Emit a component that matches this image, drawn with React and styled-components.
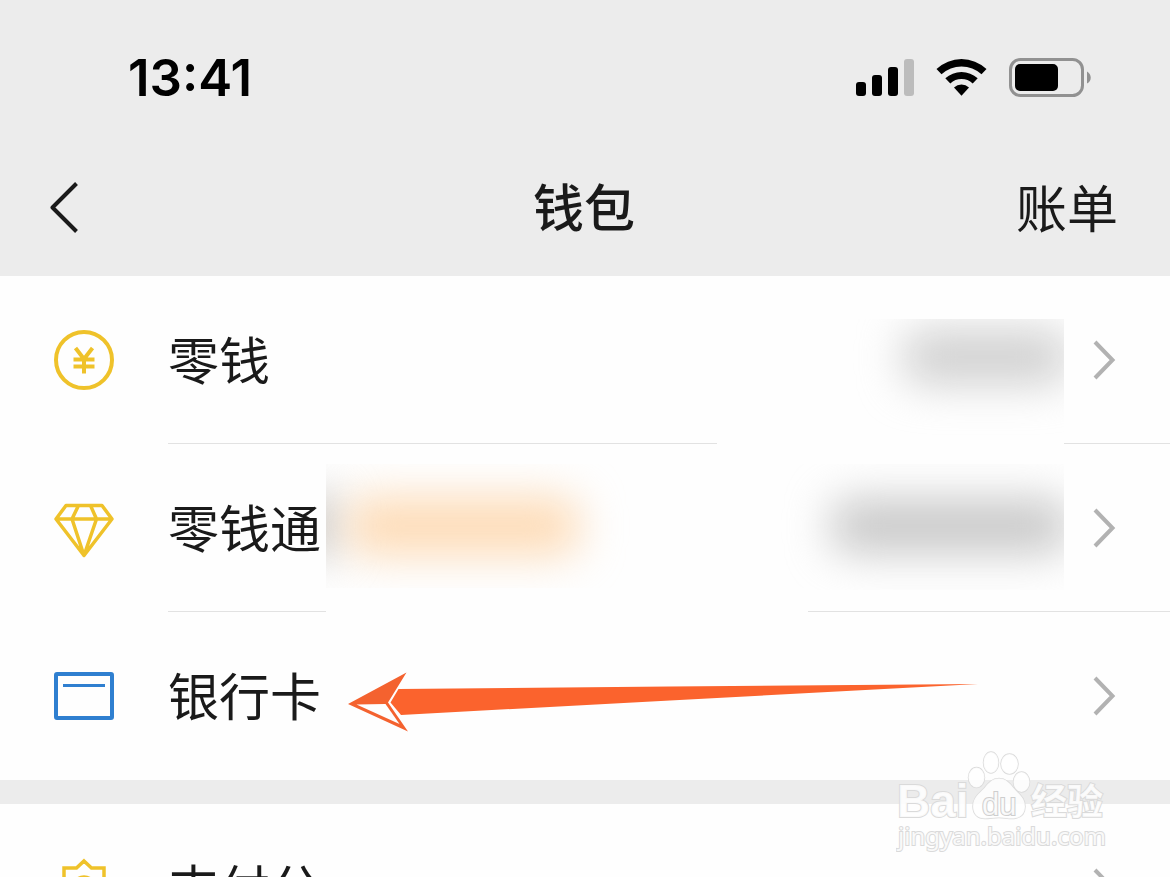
import React from "react";
import styled, { createGlobalStyle } from "styled-components";

const GlobalStyle = createGlobalStyle`
  * {
    box-sizing: border-box;
  }
  body {
    margin: 0;
    background: #ececec;
    font-family: "Noto Sans CJK SC", "Noto Sans", sans-serif;
    color: #1a1a1a;
  }
`;

const Page = styled.div`
  position: relative;
  height: 100vh;
  overflow: hidden;
  background: #ececec;
`;

const StatusBar = styled.div`
  display: flex;
  align-items: center;
  justify-content: space-between;
  height: 140px;
  padding: 16px 78px 0 128px;
`;

const Time = styled.span`
  font-family: "Inter", sans-serif;
  font-size: 51px;
  line-height: 60px;
  font-weight: 600;
  color: #000;
`;

const StatusIcons = styled.div`
  display: flex;
  align-items: center;
  gap: 20px;

  svg {
    display: block;
  }
`;

const NavBar = styled.header`
  display: grid;
  grid-template-columns: 1fr auto 1fr;
  align-items: center;
  height: 136px;
  padding: 0 52px 0 50px;
`;

const NavButton = styled.button`
  justify-self: ${(props) => (props.$end ? "end" : "start")};
  padding: 0 0 ${(props) => (props.$end ? 4 : 0)}px;
  border: 0;
  background: none;
  font: inherit;
  font-size: 51px;
  line-height: 72px;
  color: inherit;

  svg {
    display: block;
  }
`;

const Title = styled.h1`
  margin: 0;
  padding-bottom: 6px;
  font-size: 51px;
  line-height: 72px;
  font-weight: 500;
`;

const Group = styled.ul`
  margin: 0 0 24px;
  padding: 0;
  list-style: none;
  background: #fefefe;
`;

const Item = styled.li`
  position: relative;
`;

const Row = styled.a`
  display: flex;
  height: 168px;
  padding-left: 54px;
  color: inherit;
  text-decoration: none;
`;

const RowIcon = styled.span`
  display: flex;
  align-items: center;
  width: 114px;
`;

const RowBody = styled.span`
  display: flex;
  flex: 1;
  align-items: center;
  justify-content: space-between;
  padding-right: 54px;
  border-bottom: 1px solid ${(props) => (props.$last ? "transparent" : "#e2e2e2")};
`;

const RowLabel = styled.span`
  padding-bottom: 4px;
  font-size: 51px;
  line-height: 72px;
`;

// Covers private amounts, lies over the row and its divider
const Mask = styled.span`
  position: absolute;
  top: ${(props) => props.$top}px;
  left: ${(props) => props.$left}px;
  right: 106px;
  height: ${(props) => props.$height}px;
  overflow: hidden;
  background: #fefefe;
  pointer-events: none;
`;

const Smudge = styled.span`
  position: absolute;
  top: ${(props) => props.$top}px;
  ${(props) => props.$side}: ${(props) => props.$offset}px;
  width: ${(props) => props.$width}px;
  height: ${(props) => props.$height}px;
  border-radius: 16px;
  background: ${(props) => props.$color};
  filter: blur(22px);
`;

const LineCover = styled.span`
  position: absolute;
  left: 326px;
  bottom: 0;
  width: 482px;
  height: 24px;
  background: #fefefe;
  pointer-events: none;
`;

const Pointer = styled.svg`
  position: absolute;
  top: 60px;
  left: 348px;
  pointer-events: none;
`;

const Watermark = styled.svg`
  position: absolute;
  top: 744px;
  right: 54px;
  pointer-events: none;
`;

function Signal() {
  return (
    <svg width="60" height="40" viewBox="0 0 60 40">
      <rect x="0" y="24" width="10" height="14" rx="3" />
      <rect x="16" y="17" width="10" height="21" rx="3" />
      <rect x="32" y="9" width="10" height="29" rx="3" />
      <rect x="48" y="1" width="10" height="37" rx="3" fill="#bcbcbc" />
    </svg>
  );
}

function Wifi() {
  return (
    <svg width="52" height="40" viewBox="0 0 52 40">
      <path d="M0.500 11a36.500 36.500 0 0 1 50 0l-5 5.300a29.500 29.500 0 0 0-40 0z" />
      <path d="M9.300 20.300a24 24 0 0 1 32.400 0l-5 5.200a16.500 16.500 0 0 0-22.400 0z" />
      <path d="M18 29.500a11.200 11.200 0 0 1 15 0l-7.500 8.200z" />
    </svg>
  );
}

function Battery() {
  return (
    <svg width="84" height="40" viewBox="0 0 84 40">
      <rect x="2.500" y="1.500" width="72" height="36" rx="10" fill="none" stroke="#919191" strokeWidth="3" />
      <rect x="7" y="6" width="43" height="27" rx="5" />
      <path d="M79 13.500c5 3 5 9.500 0 12z" fill="#919191" />
    </svg>
  );
}

function BackIcon() {
  return (
    <svg width="30" height="52" viewBox="0 0 30 52" fill="none" stroke="#1a1a1a" strokeWidth="4">
      <path d="M26.500 1.500L2.500 25.500l24 24" strokeLinejoin="round" />
    </svg>
  );
}

function Chevron() {
  return (
    <svg width="24" height="40" viewBox="0 0 24 40" fill="none" stroke="#b2b2b2" strokeWidth="4">
      <path d="M3 2l17.500 18L3 38" />
    </svg>
  );
}

function CoinIcon() {
  return (
    <svg width="60" height="60" viewBox="0 0 60 60" fill="none" stroke="#efc22a" strokeWidth="4">
      <circle cx="30" cy="30" r="28" />
      <path d="M21.500 18l8.500 11 8.500-11M19.500 29.500h21M19.500 36.500h21M30 29v14.500" />
    </svg>
  );
}

function DiamondIcon() {
  return (
    <svg width="60" height="60" viewBox="0 0 60 60" fill="none" stroke="#efc22a" strokeWidth="3.500" strokeLinejoin="round">
      <path d="M12 7.500h36L58 21 30 57.500 2 21zM2 21h56M24.500 7.500L18 21 30 57.500 42.500 21 36.500 7.500" />
    </svg>
  );
}

function CardIcon() {
  return (
    <svg width="60" height="60" viewBox="0 0 60 60" fill="none" stroke="#2f7fd0" strokeWidth="4">
      <rect x="2" y="8" width="56" height="44" rx="1" />
      <path d="M9 19.500h42" strokeWidth="3" />
    </svg>
  );
}

function BadgeIcon() {
  return (
    <svg width="60" height="60" viewBox="0 0 60 60" fill="none" stroke="#efc22a" strokeWidth="3.500">
      <path d="M30 3l7.500 7H50v12.500L57.500 30 50 37.500V50H37.500L30 57.500 22.500 50H10V37.500L2.500 30 10 22.500V10h12.500z" />
      <circle cx="30" cy="30" r="11" />
    </svg>
  );
}

function ListRow({ icon, label, last, children }) {
  return (
    <Item>
      <Row href="#">
        <RowIcon>{icon}</RowIcon>
        <RowBody $last={last}>
          <RowLabel>{label}</RowLabel>
          <Chevron />
        </RowBody>
      </Row>
      {children}
    </Item>
  );
}

function SiteMark() {
  return (
    <Watermark
      width="220"
      height="112"
      viewBox="0 0 220 112"
      fill="#fff"
      fillOpacity="0.85"
      stroke="#dadada"
      strokeWidth="1.500"
      paintOrder="stroke"
    >
      <ellipse cx="80.500" cy="33.500" rx="8" ry="10" />
      <ellipse cx="95" cy="18.500" rx="7.500" ry="10.500" />
      <ellipse cx="113.500" cy="20" rx="8.500" ry="10" />
      <ellipse cx="125.500" cy="38" rx="8" ry="10" />
      <path d="M103 34.500c-7 0-11 5-15 10-5 5-11 9-11 18 0 8 5 12 12 12 5 0 9-1 14-1s10 1.500 15 1c8-1 11-6 11-12 0-9-6-12-11-18-4-5-8-10-15-10z" />
      <text x="1" y="73" fontFamily="Liberation Sans, sans-serif" fontWeight="700" fontSize="46" strokeWidth="2">
        Bai
      </text>
      <text x="86" y="71" fontFamily="Liberation Sans, sans-serif" fontSize="31" stroke="#cecece" strokeWidth="2">
        du
      </text>
      <text x="135" y="71" fontFamily="Noto Sans CJK SC, sans-serif" fontWeight="700" fontSize="36" strokeWidth="2">
        经验
      </text>
      <text x="2" y="101" fontFamily="Noto Sans, sans-serif" fontSize="24" strokeWidth="2">
        jingyan.baidu.com
      </text>
    </Watermark>
  );
}

export default function App() {
  return (
    <>
      <GlobalStyle />
      <Page>
        <StatusBar>
          <Time>13:41</Time>
          <StatusIcons>
            <Signal />
            <Wifi />
            <Battery />
          </StatusIcons>
        </StatusBar>
        <NavBar>
          <NavButton aria-label="返回">
            <BackIcon />
          </NavButton>
          <Title>钱包</Title>
          <NavButton $end>账单</NavButton>
        </NavBar>
        <Group>
          <ListRow icon={<CoinIcon />} label="零钱">
            <Mask $top={43} $left={717} $height={140}>
              <Smudge $side="right" $offset={-4} $top={12} $width={164} $height={52} $color="#cecece" />
            </Mask>
          </ListRow>
          <ListRow icon={<DiamondIcon />} label="零钱通">
            <Mask $top={20} $left={326} $height={126}>
              <Smudge $side="left" $offset={-30} $top={30} $width={40} $height={62} $color="#c0c0c0" />
              <Smudge $side="left" $offset={22} $top={34} $width={230} $height={56} $color="#fddab4" />
              <Smudge $side="right" $offset={-4} $top={36} $width={236} $height={52} $color="#c6c6c6" />
            </Mask>
            <LineCover />
          </ListRow>
          <ListRow icon={<CardIcon />} label="银行卡" last>
            <Pointer width="630" height="60" viewBox="0 0 630 60">
              <path d="M0 32L58.500 0.500 40 30.500 60 59.500z" fill="#f4622f" />
              <path d="M8.500 32.500L37.500 32 51.500 52z" fill="#fefefe" />
              <path d="M50.500 17L322 14.500 630 12 322 28.500 53 43 42.500 30.500z" fill="#fb632d" />
            </Pointer>
          </ListRow>
        </Group>
        <Group>
          <ListRow icon={<BadgeIcon />} label="支付分" />
        </Group>
        <SiteMark />
      </Page>
    </>
  );
}
